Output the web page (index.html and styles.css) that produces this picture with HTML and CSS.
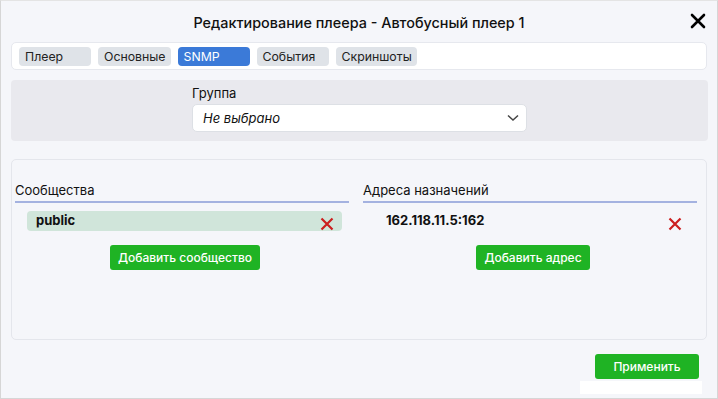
FILE: index.html
```html
<!DOCTYPE html>
<html lang="ru">

<head>
    <meta charset="UTF-8">
    <meta name="viewport" content="width=device-width, initial-scale=1.0">
    <title>Редактирование плеера</title>
    <link rel="stylesheet" href="styles.css">
</head>

<body>

    <div class="dialog">
        <!-- Header -->
        <div class="dialog-header">
            <h2>Редактирование плеера - Автобусный плеер 1</h2>
            <button class="close-btn" title="Закрыть">
                <svg width="16" height="16" viewBox="0 0 16 16">
                    <path d="M2 2 L14 14 M14 2 L2 14" stroke="#000" stroke-width="2.6" stroke-linecap="round" />
                </svg>
            </button>
        </div>

        <!-- Tabs -->
        <div class="tabs">
            <span class="tab">Плеер</span>
            <span class="tab">Основные</span>
            <span class="tab active">SNMP</span>
            <span class="tab">События</span>
            <span class="tab">Скриншоты</span>
        </div>

        <!-- Group -->
        <div class="group-box">
            <div class="group-field">
                <label>Группа</label>
                <div class="select">
                    <span>Не выбрано</span>
                    <svg width="12" height="8" viewBox="0 0 12 8">
                        <path d="M1 1.5 L6 6 L11 1.5" fill="none" stroke="#444" stroke-width="1.5" />
                    </svg>
                </div>
            </div>
        </div>

        <!-- SNMP settings -->
        <div class="snmp-panel">
            <div class="column">
                <h4>Сообщества</h4>
                <div class="item community">
                    <span>public</span>
                    <svg class="remove" width="14" height="14" viewBox="0 0 14 14">
                        <path d="M1.5 1.5 L12.5 12.5 M12.5 1.5 L1.5 12.5" stroke="#cc1f1f" stroke-width="2.2" />
                    </svg>
                </div>
                <button class="btn">Добавить сообщество</button>
            </div>
            <div class="column">
                <h4>Адреса назначений</h4>
                <div class="item address">
                    <span>162.118.11.5:162</span>
                    <svg class="remove" width="14" height="14" viewBox="0 0 14 14">
                        <path d="M1.5 1.5 L12.5 12.5 M12.5 1.5 L1.5 12.5" stroke="#cc1f1f" stroke-width="2.2" />
                    </svg>
                </div>
                <button class="btn">Добавить адрес</button>
            </div>
        </div>

        <!-- Footer -->
        <div class="dialog-footer">
            <div class="footer-actions">
                <button class="btn apply">Применить</button>
                <div class="footer-blank"></div>
            </div>
        </div>
    </div>

</body>

</html>
```

FILE: styles.css
```css
/* Basic Reset */
* {
    margin: 0;
    padding: 0;
    box-sizing: border-box;
}

body {
    font-family: Inter, 'Noto Sans', sans-serif;
    color: #111;
    background-color: #fff;
}

/* Dialog */
.dialog {
    width: 718px;
    height: 399px;
    background-color: #f5f6fa;
    border: 1px solid #d6d6d6;
    border-top-color: #e4e4e4;
    display: flex;
    flex-direction: column;
}

.dialog-header {
    position: relative;
    height: 41px;
    display: flex;
    align-items: center;
    justify-content: center;
}

.dialog-header h2 {
    font-size: 14.4px;
    font-weight: 500;
    color: #111;
    margin-top: 2px;
}

.close-btn {
    position: absolute;
    right: 11px;
    top: 12px;
    border: none;
    background: none;
    width: 16px;
    height: 16px;
    cursor: pointer;
}

.close-btn svg {
    display: block;
}

/* Tabs */
.tabs {
    margin: 0 10px;
    height: 28px;
    background-color: #fff;
    border: 1px solid #e6e8ee;
    border-radius: 5px;
    display: flex;
    align-items: center;
    gap: 7px;
    padding: 0 7px;
}

.tab {
    min-width: 72px;
    height: 19px;
    line-height: 19px;
    padding: 0 5px 0 6px;
    font-size: 12.3px;
    color: #222;
    background-color: #dfe3e8;
    border-radius: 4px;
}

.tab.active {
    background-color: #3b7ad8;
    color: #fff;
}

/* Group */
.group-box {
    margin: 10px 9px 0 10px;
    height: 61px;
    background-color: #e9e9ee;
    border-radius: 4px;
    padding: 5px 0 0 181px;
}

.group-field label {
    display: block;
    font-size: 13px;
    line-height: 16px;
    margin-bottom: 3px;
}

.select {
    width: 335px;
    height: 28px;
    background-color: #fff;
    border: 1px solid #dde0e5;
    border-radius: 5px;
    display: flex;
    align-items: center;
    justify-content: space-between;
    padding: 0 7px 0 10px;
    font-size: 13px;
    font-style: italic;
}

/* SNMP panel */
.snmp-panel {
    margin: 18px 10px 0 10px;
    height: 181px;
    border: 1px solid #e4e6ec;
    border-radius: 5px;
    display: flex;
    gap: 14px;
    padding: 22px 9px 0 3px;
}

.column {
    flex: 1;
    display: flex;
    flex-direction: column;
    align-items: center;
}

.column h4 {
    align-self: stretch;
    font-size: 13px;
    font-weight: 400;
    line-height: 16px;
    padding-bottom: 3px;
    border-bottom: 2px solid #a4b2e0;
}

.item {
    align-self: stretch;
    height: 20px;
    margin-top: 8px;
    display: flex;
    align-items: center;
    justify-content: space-between;
    font-size: 13px;
    font-weight: 700;
}

.item.community {
    margin-left: 12px;
    margin-right: 7px;
    padding: 0 8px 0 9px;
    background-color: #d0e5da;
    border-radius: 4px;
}

.item.community span {
    margin-top: -3px;
}

.item .remove {
    margin-top: 5px;
}

.item.address {
    margin-left: 23px;
    margin-right: 15px;
}

.item.address span {
    margin-top: -3px;
}

.btn {
    margin: 14px 0 0 6px;
    height: 25px;
    padding: 0 8px;
    border: none;
    border-radius: 3px;
    background-color: #1fb324;
    color: #fff;
    font-family: Inter, 'Noto Sans', sans-serif;
    font-size: 12px;
    font-weight: 500;
    cursor: pointer;
}

/* Footer */
.dialog-footer {
    flex: 1;
    display: flex;
    justify-content: flex-end;
    padding: 14px 18px 0 0;
}

.footer-actions {
    display: flex;
    flex-direction: column;
    align-items: flex-end;
}

.btn.apply {
    margin: 0;
    width: 104px;
    height: 25px;
}

.footer-blank {
    width: 122px;
    height: 13px;
    margin-top: 2px;
    margin-right: -3px;
    background-color: #fff;
}
```
